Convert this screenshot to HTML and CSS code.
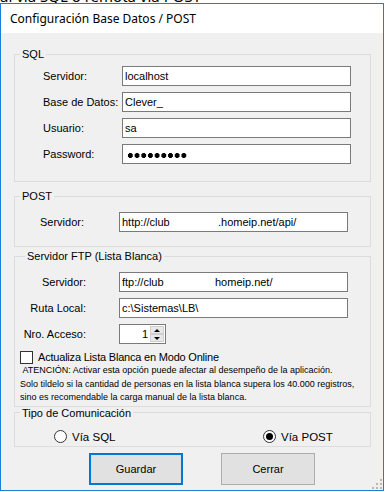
FILE: index.html
```html
<!DOCTYPE html>
<html lang="es">
<head>
    <meta charset="UTF-8" />
    <meta name="viewport" content="width=device-width, initial-scale=1" />
    <title>Configuración Base Datos / POST</title>
    <link rel="stylesheet" href="styles.css">
</head>
<body>

    <div class="behind"><span>al via SQL o remota via POST</span></div>

    <div class="window">
        <div class="titlebar">Configuración Base Datos / POST</div>

        <div class="client">
            <fieldset class="group group-sql">
                <legend>SQL</legend>
                <div class="rows">
                    <div class="row"><label>Servidor:</label><div class="field">localhost</div></div>
                    <div class="row"><label>Base de Datos:</label><div class="field">Clever_</div></div>
                    <div class="row"><label>Usuario:</label><div class="field">sa</div></div>
                    <div class="row"><label>Password:</label><div class="field"><span class="dots"></span></div></div>
                </div>
            </fieldset>

            <fieldset class="group group-post">
                <legend>POST</legend>
                <div class="rows">
                    <div class="row"><label>Servidor:</label><div class="field"><span class="clip clip-post">http://club</span>.homeip.net/api/</div></div>
                </div>
            </fieldset>

            <fieldset class="group group-ftp">
                <legend>Servidor FTP (Lista Blanca)</legend>
                <div class="rows">
                    <div class="row"><label>Servidor:</label><div class="field"><span class="clip clip-ftp">ftp://club</span>homeip.net/</div></div>
                    <div class="row"><label>Ruta Local:</label><div class="field">c:\Sistemas\LB\</div></div>
                    <div class="row">
                        <label>Nro. Acceso:</label>
                        <div class="spin">
                            <span class="spin-value">1</span>
                            <span class="spin-buttons">
                                <span class="spin-btn"><i class="arrow-up"></i></span>
                                <span class="spin-btn"><i class="arrow-down"></i></span>
                            </span>
                        </div>
                    </div>
                </div>
                <div class="check-row">
                    <span class="checkbox"></span>
                    <span>Actualiza Lista Blanca en Modo Online</span>
                </div>
                <p class="note">&nbsp;ATENCIÓN: Activar esta opción puede afectar al desempeño de la aplicación.<br>Solo tildelo si la cantidad de personas en la lista blanca supera los 40.000 registros,<br>sino es recomendable la carga manual de la lista blanca.</p>
            </fieldset>

            <fieldset class="group group-tipo">
                <legend>Tipo de Comunicación</legend>
                <div class="radios">
                    <div class="radio"><span class="radio-mark"></span>Vía SQL</div>
                    <div class="radio"><span class="radio-mark checked"></span>Vía POST</div>
                </div>
            </fieldset>

            <div class="buttons">
                <button type="button" class="btn btn-default">Guardar</button>
                <button type="button" class="btn">Cerrar</button>
            </div>

            <svg class="grip" width="10" height="10" viewBox="0 0 10 10">
                <rect x="8" y="0" width="2" height="2" fill="#b8b8b8"/>
                <rect x="4" y="4" width="2" height="2" fill="#b8b8b8"/>
                <rect x="8" y="4" width="2" height="2" fill="#b8b8b8"/>
                <rect x="0" y="8" width="2" height="2" fill="#b8b8b8"/>
                <rect x="4" y="8" width="2" height="2" fill="#b8b8b8"/>
                <rect x="8" y="8" width="2" height="2" fill="#b8b8b8"/>
            </svg>
        </div>
    </div>

</body>
</html>
```

FILE: styles.css
```css
* {
    box-sizing: border-box;
}

body {
    margin: 0;
    background-color: #fff;
    font-family: 'Liberation Sans', Arial, sans-serif;
    font-size: 11px;
    color: #000;
    overflow: hidden;
}

.behind {
    height: 3px;
    overflow: hidden;
    font-family: 'Noto Sans', sans-serif;
    font-size: 15px;
    line-height: 16px;
}

.behind span {
    display: block;
    margin-top: -12px;
}

.window {
    width: 384px;
    height: 488px;
    border: 1px solid #1a7fd6;
    display: flex;
    flex-direction: column;
}

.titlebar {
    flex-shrink: 0;
    height: 29px;
    background-color: #fff;
    padding-left: 9px;
    display: flex;
    align-items: center;
    font-family: 'Noto Sans', sans-serif;
    font-size: 12px;
}

.client {
    flex: 1;
    min-height: 0;
    position: relative;
    background-color: #f0f0f0;
    padding: 0 12px 0 13px;
}

/* group boxes */
fieldset.group {
    margin: 0;
    padding: 0;
    border: 1px solid #dcdcdc;
    min-width: 0;
}

fieldset.group legend {
    margin-left: 5px;
    padding: 0 2px;
    line-height: 14px;
}

.rows {
    display: flex;
    flex-direction: column;
    gap: 6px;
}

.row {
    display: flex;
    align-items: center;
    height: 20px;
}

.row label {
    width: 79px;
    flex-shrink: 0;
}

.field {
    width: 229px;
    height: 20px;
    border: 1px solid #7a7a7a;
    background-color: #fff;
    padding: 0 2px;
    line-height: 18px;
    white-space: nowrap;
    overflow: hidden;
}

.clip {
    display: inline-block;
    overflow: hidden;
    vertical-align: top;
}

.clip-post {
    width: 96px;
}

.clip-ftp {
    width: 93px;
}

.dots {
    display: inline-block;
    width: 61px;
    height: 5px;
    margin-left: 2px;
    vertical-align: middle;
    background: radial-gradient(circle, #000 2.2px, transparent 2.7px) 0 0 / 6.7px 5px repeat-x;
}

fieldset.group-sql {
    margin-top: 14px;
}

.group-sql .rows {
    padding: 5px 0 17px 28px;
}

fieldset.group-post {
    margin-top: 7px;
}

.group-post .rows {
    padding: 9px 0 14px 25px;
}

fieldset.group-ftp {
    margin-top: 2px;
    padding-left: 5px;
}

.group-ftp .rows {
    padding-top: 9px;
}

.group-ftp .row label {
    width: 99px;
    padding-right: 33px;
    text-align: right;
}

/* numeric up-down */
.spin {
    width: 47px;
    height: 20px;
    border: 1px solid #7a7a7a;
    background-color: #fff;
    display: flex;
}

.spin-value {
    flex: 1;
    text-align: right;
    line-height: 18px;
    padding-right: 2px;
}

.spin-buttons {
    width: 15px;
    display: flex;
    flex-direction: column;
    padding: 1px 1px 1px 0;
}

.spin-btn {
    flex: 1;
    border: 1px solid #cfcfcf;
    background-color: #e8e8e8;
    display: flex;
    align-items: center;
    justify-content: center;
}

.arrow-up,
.arrow-down {
    width: 0;
    height: 0;
    border-left: 3px solid transparent;
    border-right: 3px solid transparent;
}

.arrow-up {
    border-bottom: 3px solid #000;
}

.arrow-down {
    border-top: 3px solid #000;
}

.check-row {
    display: flex;
    align-items: center;
    gap: 5px;
    margin-top: 6px;
    height: 14px;
    letter-spacing: -0.2px;
}

.checkbox {
    width: 13px;
    height: 13px;
    border: 1px solid #333;
    background-color: #fff;
}

.note {
    margin: 0;
    font-size: 9px;
    line-height: 13.5px;
    padding-bottom: 1px;
}

/* radio buttons */
fieldset.group-tipo {
    margin-top: -1px;
}

.radios {
    display: grid;
    grid-template-columns: 209px auto;
    padding: 10px 0 2px 39px;
}

.radio {
    display: flex;
    align-items: center;
    gap: 5px;
    height: 14px;
    font-size: 11.5px;
}

.radio-mark {
    width: 13px;
    height: 13px;
    border: 1px solid #333;
    border-radius: 50%;
    background-color: #fff;
    display: flex;
    align-items: center;
    justify-content: center;
}

.radio-mark.checked::after {
    content: '';
    width: 7px;
    height: 7px;
    border-radius: 50%;
    background-color: #000;
}

/* buttons */
.buttons {
    display: flex;
    gap: 38px;
    padding-left: 75px;
    margin-top: 6px;
}

.btn {
    width: 94px;
    height: 32px;
    background-color: #e1e1e1;
    border: 1px solid #adadad;
    font-family: 'Liberation Sans', Arial, sans-serif;
    font-size: 11px;
    color: #000;
    padding: 0;
}

.btn-default {
    border: 2px solid #0078d7;
}

.grip {
    position: absolute;
    right: 1px;
    bottom: 1px;
}
```
